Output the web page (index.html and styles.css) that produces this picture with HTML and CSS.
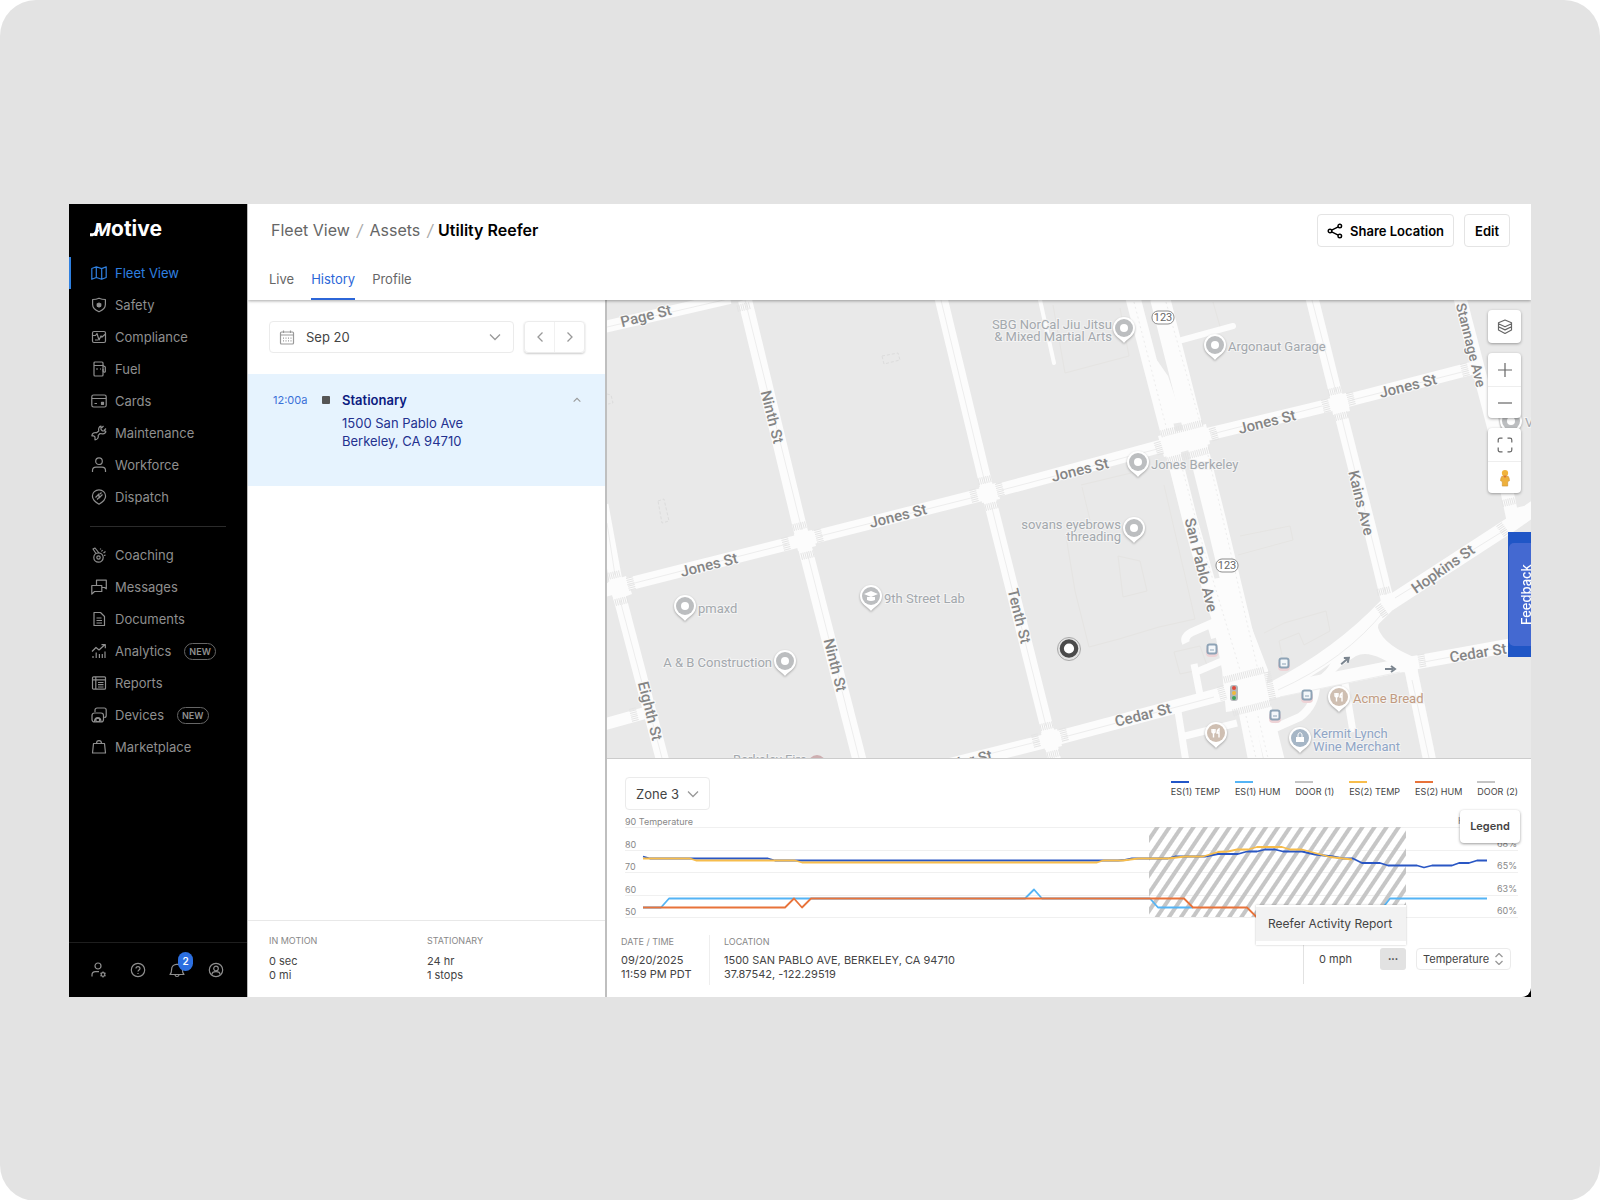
FILE: index.html
```html
<!DOCTYPE html>
<html lang="en">
<head>
<meta charset="utf-8">
<meta name="viewport" content="width=device-width, initial-scale=1">
<title>Utility Reefer - Fleet View</title>
<link rel="stylesheet" href="styles.css">
</head>
<body>
<div class="stage">
<div class="app">
  <aside class="sidebar">
    <svg class="logo" width="76" height="24" viewBox="0 0 76 24" role="img" aria-label="Motive">
      <path class="logo-tail" d="M1 18.700h2.500q2 0 3.500-2.200l2-3"/>
      <text class="logo-m" x="5" y="20">M</text>
      <text class="logo-rest" x="22" y="20">otive</text>
    </svg>
    <nav class="nav">
      <a class="nav-item active" href="#"><svg class="icon" viewBox="0 0 16 16"><path d="M.8 3.500 5.300 1.800l5.400 1.800 4.500-1.800v10.700l-4.500 1.800-5.400-1.800-4.500 1.800zM5.300 1.800v10.700M10.700 3.600v10.700"/></svg>Fleet View</a>
      <a class="nav-item" href="#"><svg class="icon" viewBox="0 0 16 16"><path d="M8 1.200c2 .9 4.200 1.300 6.400 1.300v5c0 3.500-2.600 5.700-6.400 7.300C4.200 13.200 1.600 11 1.600 7.500v-5C3.800 2.500 6 2.100 8 1.200z"/><path d="M8 5l.8 1.200 1.500-.3-.3 1.400L11 8l-1 .8.200 1.300-1.400-.2L8 11l-.8-1.100-1.400.2L6 8.800 5 8l1-.7-.3-1.400 1.500.3z" class="dim-fill"/></svg>Safety</a>
      <a class="nav-item" href="#"><svg class="icon" viewBox="0 0 16 16"><rect x="1.500" y="2.500" width="13" height="11" rx="1.500"/><path d="M1.500 6.500h3l1.500-2 2 6.500 2-4 1 1 3.500-3M4 11h3"/></svg>Compliance</a>
      <a class="nav-item" href="#"><svg class="icon" viewBox="0 0 16 16"><rect x="3" y="1" width="9" height="14" rx="1"/><path d="M3 4.500h9M5 8h2M9 8h1M12 4.500l2.300 1.500v4.500c0 1-2.300 1-2.300-1V8"/></svg>Fuel</a>
      <a class="nav-item" href="#"><svg class="icon" viewBox="0 0 16 16"><rect x=".8" y="2" width="14.400" height="12" rx="1.800"/><path d="M1 5.500h14M3.500 10.500h2.500"/><rect x="10.500" y="9.300" width="2" height="2" class="fill"/></svg>Cards</a>
      <a class="nav-item" href="#"><svg class="icon" viewBox="0 0 16 16"><path d="M10 1.200v3.300L11.500 6h3.300c.3 1.500-1.300 3-3.300 2.800L9 8.500 7.200 10.300c.5 2-.5 4.500-3.200 4.500V12l-1.200-1.200H.9C1 8.300 3.500 7 5.500 7.800L7.800 6C7 3.500 8.300 1.500 10 1.200zM12.500 1l-1.800 1.800M15 3.500l-2 2"/></svg>Maintenance</a>
      <a class="nav-item" href="#"><svg class="icon" viewBox="0 0 16 16"><circle cx="8" cy="4.200" r="3.300"/><path d="M1.500 15v-1.500c0-2 1.500-3.300 3.500-3.300h6c2 0 3.500 1.300 3.500 3.300V15"/></svg>Workforce</a>
      <a class="nav-item" href="#"><svg class="icon" viewBox="0 0 16 16"><path d="M8 15.200S1.400 11.500 1.400 7a6.600 6.200 0 0 1 13.200 0c0 4.500-6.600 8.200-6.600 8.200z"/><path d="M4.500 8.500 8 5v4l3.500-3.500M6 10.500l1.500-1.500M9 5l1.500-1.500"/></svg>Dispatch</a>
      <hr class="nav-rule">
      <a class="nav-item" href="#"><svg class="icon" viewBox="0 0 16 16"><circle cx="7.500" cy="10.500" r="4.700"/><circle cx="7.500" cy="10.500" r="1.700"/><path d="M5 6.500 2 2l2-1 4 5M10.500 4.500l1-1.500M12.500 6l2-1.500M13 8.500l1.500-.3M9.500 1.500v1"/></svg>Coaching</a>
      <a class="nav-item" href="#"><svg class="icon" viewBox="0 0 16 16"><path d="M5.500 6V1.200h9.800v8.600l-1.800-1.300h-2.700M.8 15.200V6.500h10v6H3.500z"/></svg>Messages</a>
      <a class="nav-item" href="#"><svg class="icon" viewBox="0 0 16 16"><path d="M3 1.500h6.500l4 4v9H3zM5.500 7h5M5.500 9.500h5.500M5.500 12h5.500"/></svg>Documents</a>
      <a class="nav-item" href="#"><svg class="icon" viewBox="0 0 16 16"><path d="M1 8.500 5 4.500l3 2.500 5.500-5M10.500 1.700h3.800v3.600M2 15v-2M5.200 15V9.500M8.400 15v-4M11.300 15v-4M14 15V8.500"/></svg>Analytics<span class="tag">NEW</span></a>
      <a class="nav-item" href="#"><svg class="icon" viewBox="0 0 16 16"><rect x="1.500" y="1.800" width="13" height="12.400" rx="1"/><path d="M1.500 4.800h13M4.800 2v12M7 7.500h5.500M7 9.700h5.500M7 12h5.500"/></svg>Reports</a>
      <a class="nav-item" href="#"><svg class="icon" viewBox="0 0 16 16"><path d="M4 5V3a2 2 0 0 1 2-2h7.200a2 2 0 0 1 2 2v5.500a2 2 0 0 1-2 2"/><rect x="1" y="6" width="11.500" height="9" rx="2.500"/><path d="M3.500 15c0-6 6.500-6 6.500 0M5 11.500h3.500v3H5z"/></svg>Devices<span class="tag">NEW</span></a>
      <a class="nav-item" href="#"><svg class="icon" viewBox="0 0 16 16"><path d="M2.500 4.500h11l1 9.500h-13zM5.500 4.500c0-3.800 5-3.800 5 0"/></svg>Marketplace</a>
    </nav>
    <div class="tools">
      <button aria-label="Admin"><svg class="icon" viewBox="0 0 16 16"><circle cx="7" cy="4" r="3"/><path d="M1 14.500V13c0-2 1.200-3.300 3.500-3.300H8"/><circle cx="12" cy="12.500" r="1.800"/><path d="M12 9.500v1.200M12 14.300v1.200M9.400 11l1 .6M13.600 13.400l1 .6M9.400 14l1-.6M13.600 11.600l1-.6"/></svg></button>
      <button aria-label="Help"><svg class="icon" viewBox="0 0 16 16"><circle cx="8" cy="8" r="6.700"/><path d="M6 6.500C6 3.800 10 4 10 6.400 10 8 8 8 8 9.600M8 11v1"/></svg></button>
      <button class="bell" aria-label="Notifications, 2 new"><svg class="icon" viewBox="0 0 16 16"><path d="M1 12.500c1.300-1 1.600-2.300 1.600-5A5 5 0 0 1 8 2.300a5 5 0 0 1 5.400 5.200c0 2.700.3 4 1.600 5zM6 13c.3 2 3.700 2 4 0"/></svg><span class="count">2</span></button>
      <button aria-label="Account"><svg class="icon" viewBox="0 0 16 16"><circle cx="8" cy="8" r="6.700"/><circle cx="8" cy="6.500" r="2.300"/><path d="M4 12.500c0-2 1.500-2.800 4-2.800s4 .8 4 2.800"/></svg></button>
    </div>
  </aside>

  <main class="main">
    <header class="header">
      <div class="title-row">
        <nav class="crumbs"><a href="#">Fleet View</a><i>/</i><a href="#">Assets</a><i>/</i><b>Utility Reefer</b></nav>
        <div class="actions">
          <button class="btn"><svg class="icon share" viewBox="0 0 16 16"><circle cx="3" cy="8" r="1.800"/><circle cx="12.800" cy="3" r="1.800"/><circle cx="12.800" cy="13" r="1.800"/><path d="m4.700 7.200 6.500-3.400M4.700 8.800l6.500 3.400"/></svg>Share Location</button>
          <button class="btn edit">Edit</button>
        </div>
      </div>
      <nav class="tabs"><a href="#">Live</a><a class="current" href="#">History</a><a href="#">Profile</a></nav>
    </header>

    <div class="body">
      <section class="history">
        <div class="date-row">
          <div class="select date-select">
            <svg class="icon" viewBox="0 0 16 16"><rect x="1.500" y="3" width="13" height="12" rx="1"/><path d="M1.500 6h13M4.500 1.500V4M11.500 1.500V4"/><path d="M4 9.200h8.500M4 11.800h8.500" stroke-dasharray="1 1.500"/></svg>
            <select aria-label="Date"><option>Sep 20</option></select>
            <svg class="chev" viewBox="0 0 12 12"><path d="m1 3.500 5 5 5-5"/></svg>
          </div>
          <div class="pager">
            <button aria-label="Previous day"><svg class="chev" viewBox="0 0 12 12"><path d="M8.500 1.500 4 6l4.500 4.500"/></svg></button>
            <button aria-label="Next day"><svg class="chev" viewBox="0 0 12 12"><path d="M3.500 1.500 8 6l-4.500 4.500"/></svg></button>
          </div>
        </div>
        <article class="event">
          <time>12:00a</time>
          <span class="stop"></span>
          <div class="place"><h2>Stationary</h2><p>1500 San Pablo Ave<br>Berkeley, CA 94710</p></div>
          <svg class="chev small" viewBox="0 0 12 12"><path d="m2 8 4-4 4 4"/></svg>
        </article>
        <footer class="totals">
          <dl><dt>IN MOTION</dt><dd>0 sec</dd><dd>0 mi</dd></dl>
          <dl><dt>STATIONARY</dt><dd>24 hr</dd><dd>1 stops</dd></dl>
        </footer>
      </section>

      <section class="detail">
        <div class="map">
          <svg class="map-art" viewBox="607 300 924 458" preserveAspectRatio="xMidYMid slice" role="img" aria-label="Street map of Berkeley">
            <defs>
              <g id="pin"><path class="pin-drop" d="M0 15 C-3 11-11 8-11 0a11 11 0 0 1 22 0C11 8 3 11 0 15z"/><circle class="pin-disc" r="9"/></g>
              <g id="dotpin"><use href="#pin"/><circle r="4" fill="#fff"/></g>
              <g id="fork"><path d="M-4-4v3q1.500 2 3 0v-3M-2.500-4v8.500M3 4.500V-4q-2 1-2 4h2" fill="none" stroke="#fff" stroke-width="1.400"/></g>
              <g id="bus"><rect x="-6" y="-3" width="12" height="11" rx="4" fill="#eed3d6"/><rect x="-5.500" y="-5.500" width="11" height="11" rx="3" fill="#8ea3b6"/><rect x="-3.500" y="-3.500" width="7" height="7" rx="1" fill="#f4f7fa"/><path d="M-2 1h4" stroke="#8ea3b6"/></g>
              <path id="zebra" class="zebra" d="M-7 0H7"/>
              <path id="arrow" d="M-5 0H3M1-3l4 3-4 3" fill="none" stroke="#7b858f" stroke-width="2"/>
            </defs>
            <rect x="607" y="300" width="924" height="458" fill="#e9e9e9"/>
            <g class="faint">
              <path d="m882 356 16-3 2 7-16 4zM658 501l6-2 5 22-7 2zM607 394l4 1 2 8-5 1" stroke-dasharray="3 2"/>
              <path d="M1053 305l12 68 64-17-9-48M1213 302l8 28M1081 485l50-12M1082 487l8 33M1066 536l9 55 14 56 30-8 40-12 36-8-31-134M1118 556l22 5 7 30-24 6zM1238 555l55-15-3-14-50 10M1264 633l20-10 42-12 4 20-26 14-5-12-20 8 3 14M1174 652l26-6 8 22-28 6z"/>
            </g>
            <g class="roads">
              <path d="M600 328 730 298" stroke-width="12"/>
              <path d="M745 300 803 540 860 762" stroke-width="14"/>
              <path d="M602 505 617 587 663 762" stroke-width="13"/>
              <path d="M602 591 617 587 803 540 988 493 1180 441 1338 403 1473 368" stroke-width="13"/>
              <path d="M602 725 645 713" stroke-width="12"/>
              <path d="M941 298 988 493 1050 740 1055 762" stroke-width="13"/>
              <path d="M930 770 1050 740 1230 692" stroke-width="14"/>
              <path d="M1133 298 1170 440 1190 520 1213 600 1240 680 1256 762" stroke-width="15"/>
              <path d="M1160 298 1193 428 1216 520 1252 670 1275 762" stroke-width="20"/>
              <path d="M1312 298 1338 403 1369 525 1388 603" stroke-width="13"/>
              <path d="M1460 298 1493 425 1513 520" stroke-width="13"/>
              <path d="M1250 700Q1330 665 1387 605L1513 523 1540 504" stroke-width="15"/>
              <path d="M1378 615Q1340 665 1316 684 1316 705 1300 717L1275 728" stroke-width="8"/>
              <path d="M1260 694 1413 663 1540 640" stroke-width="14"/>
              <path d="M1410 665 1430 762" stroke-width="13"/>
              <path d="M1345 683 1353 732M1177 705 1186 762M1185 736 1237 723M1194 664 1200 695M1194 673 1222 661" stroke-width="7"/>
              <path d="M1186 643Q1183 637 1192 632L1215 622M1211 624l4 14" stroke-width="8"/>
              <path d="M1040 300 1054 363" stroke-width="4" stroke-linecap="round"/>
              <path d="M1182 340 1233 326" stroke-width="6" stroke-linecap="round"/>
            </g>
            <g fill="#fcfcfc">
              <path d="M1205 580 1232 576 1268 670 1265 706 1226 712 1222 670zM1380 605 1378 628Q1384 646 1419 659L1417 674 1402 672Q1372 648 1356 656L1320 680 1345 640z"/>
              <path d="M1158 436 1206 424 1210 444 1164 457zM608 582l18-6 6 18-18 7zM794 534l18-4 4 16-18 5zM979 487l17-4 4 16-18 4zM1330 397l16-4 4 18-17 4zM1041 733l16-4 5 17-17 4zM1506 510l18-4 3 16-17 4z"/>
              <path d="M1150 350 1168 376 1176 400 1196 420 1165 425z"/>
            </g>
            <g class="center">
              <path d="M607 327 728 299M745 300l57 230M807 552l52 206M607 523l8 52M620 600l42 158M627 585l160-41M820 536l155-39M1002 490l155-41M1212 434l110-28M1352 400l110-28M941 300l44 183M992 508l54 218M930 769l110-28M1064 737l150-40M1312 300l24 92M1341 415l45 180M1395 598l110-68M1278 690Q1345 660 1385 610M1280 697l120-25M1424 662l107-20M1412 680l17 78"/>
              <path d="M1134 302l34 132M1166 302l34 120M1180 460l24 90 36 120M1208 455l50 215M1258 716l10 42M1246 716l10 42" stroke-dasharray="2 3"/>
            </g>
            <g>
              <use href="#zebra" transform="translate(800 526) rotate(-14)"/><use href="#zebra" transform="translate(808 555) rotate(-14)"/><use href="#zebra" transform="translate(786 544) rotate(76)"/><use href="#zebra" transform="translate(819 536) rotate(76)"/>
              <use href="#zebra" transform="translate(985 480) rotate(-14)"/><use href="#zebra" transform="translate(992 506) rotate(-14)"/><use href="#zebra" transform="translate(974 496) rotate(76)"/><use href="#zebra" transform="translate(1000 490) rotate(76)"/>
              <use href="#zebra" transform="translate(614 575) rotate(-14)"/><use href="#zebra" transform="translate(622 601) rotate(-14)"/><use href="#zebra" transform="translate(631 584) rotate(76)"/><use href="#zebra" transform="translate(634 715) rotate(76)"/>
              <use href="#zebra" transform="translate(1335 391) rotate(-14)"/><use href="#zebra" transform="translate(1342 416) rotate(-14)"/><use href="#zebra" transform="translate(1326 406) rotate(76)"/><use href="#zebra" transform="translate(1351 399) rotate(76)"/><use href="#zebra" transform="translate(1465 370) rotate(76)"/>
              <use href="#zebra" transform="translate(1047 726) rotate(-14)"/><use href="#zebra" transform="translate(1054 754) rotate(-14)"/><use href="#zebra" transform="translate(1036 741) rotate(76)"/><use href="#zebra" transform="translate(1064 735) rotate(76)"/>
              <use href="#zebra" transform="translate(744 307) rotate(-14)"/><use href="#zebra" transform="translate(1384 591) rotate(-14)"/><use href="#zebra" transform="translate(1382 611) rotate(55)"/><use href="#zebra" transform="translate(1422 661) rotate(80)"/><use href="#zebra" transform="translate(1509 502) rotate(-14)"/><use href="#zebra" transform="translate(1503 530) rotate(55)"/>
              <path class="zebra" d="M1161 434l42-11M1168 461l42-11M1224 680l40-10M1233 713l38-10M1220 686l4 14M1267 672l6 28M1157 442l4 13M1212 428l4 13"/>
            </g>
            <g class="street">
              <text transform="translate(646 316) rotate(-14)">Page St</text>
              <text transform="translate(772 417) rotate(76)">Ninth St</text>
              <text transform="translate(835 665) rotate(76)">Ninth St</text>
              <text transform="translate(650 711) rotate(76)">Eighth St</text>
              <text transform="translate(1019 616) rotate(76)">Tenth St</text>
              <text transform="translate(709 565) rotate(-14)">Jones St</text>
              <text transform="translate(898 516) rotate(-14)">Jones St</text>
              <text transform="translate(1080 470) rotate(-14)">Jones St</text>
              <text transform="translate(1267 422) rotate(-14)">Jones St</text>
              <text transform="translate(1408 386) rotate(-14)">Jones St</text>
              <text transform="translate(1201 565) rotate(76)">San Pablo Ave</text>
              <text transform="translate(1361 503) rotate(76)">Kains Ave</text>
              <text class="tight" transform="translate(1471 345) rotate(76)">Stannage Ave</text>
              <text transform="translate(1443 569) rotate(-35)">Hopkins St</text>
              <text transform="translate(1143 715) rotate(-14)">Cedar St</text>
              <text transform="translate(964 762) rotate(-14)">Cedar St</text>
              <text transform="translate(1478 653) rotate(-9)">Cedar St</text>
            </g>
            <g class="shield"><rect x="1152" y="311" width="22" height="13" rx="6"/><text x="1163" y="321">123</text><rect x="1216" y="559" width="22" height="13" rx="6"/><text x="1227" y="569">123</text></g>
            <g fill="#bcbec0">
              <use href="#dotpin" x="1124" y="328"/><use href="#dotpin" x="1215" y="345"/><use href="#dotpin" x="1138" y="462"/><use href="#dotpin" x="1134" y="528"/><use href="#dotpin" x="685" y="606"/><use href="#dotpin" x="785" y="661"/><use href="#dotpin" x="1511" y="421"/>
              <use href="#pin" x="871" y="596"/>
            </g>
            <path d="m864 594 7-3 7 3-7 3zM867 597v3q4 2 8 0v-3" fill="#fff"/>
            <g class="poi">
              <text class="end" x="1112" y="329">SBG NorCal Jiu Jitsu</text><text class="end" x="1112" y="341">&amp; Mixed Martial Arts</text>
              <text x="1228" y="351">Argonaut Garage</text><text x="1151" y="469">Jones Berkeley</text>
              <text class="end" x="1121" y="529">sovans eyebrows</text><text class="end" x="1121" y="541">threading</text>
              <text x="698" y="613">pmaxd</text><text x="884" y="603">9th Street Lab</text><text class="end" x="772" y="667">A &amp; B Construction</text><text x="1525" y="427">V</text>
              <text x="733" y="764">Berkeley Fire</text>
              <g fill="#c19a80"><text x="1353" y="703">Acme Bread</text></g>
              <g fill="#8fa5c6"><text x="1313" y="738">Kermit Lynch</text><text x="1313" y="751">Wine Merchant</text></g>
            </g>
            <circle cx="817" cy="764" r="9" fill="#cdaeb0"/>
            <use href="#pin" x="1339" y="697" fill="#cfbfb2"/><use href="#fork" x="1339" y="697"/>
            <use href="#pin" x="1216" y="733" fill="#cfbfb2"/><use href="#fork" x="1216" y="733"/>
            <use href="#pin" x="1300" y="738" fill="#a6b6c6"/><path d="M1296 737h8v5h-8z" fill="#fff"/><path d="M1298 737v-2c0-3 4-3 4 0v2" fill="none" stroke="#fff"/>
            <use href="#bus" x="1212" y="649"/><use href="#bus" x="1284" y="663"/><use href="#bus" x="1307" y="695"/><use href="#bus" x="1275" y="715"/>
            <rect x="1230" y="685" width="8" height="16" rx="3" fill="#b4b7ba"/><circle cx="1234" cy="688" r="2" fill="#df4b3d"/><circle cx="1234" cy="693" r="2" fill="#f0b93a"/><circle cx="1234" cy="698" r="2" fill="#3fa45b"/>
            <use href="#arrow" transform="translate(1345 661) rotate(-40)"/><use href="#arrow" transform="translate(1390 669)"/>
            <circle cx="1069" cy="649" r="11.500" fill="#e4e4e4" stroke="#a9a9a9"/><circle cx="1069" cy="648.500" r="7.200" fill="#fff" stroke="#4b4b4b" stroke-width="4.200"/>
          </svg>
          <div class="map-controls">
            <div class="ctl"><button aria-label="Layers"><svg class="icon" viewBox="0 0 16 16"><path d="M8 1 14.500 3.800v1L8 7.800 1.500 4.800v-1zM1.500 4.800v3L8 10.900l6.500-3.100v-3M1.500 7.800v3.200L8 14.500l6.500-3.500V7.800"/></svg></button></div>
            <div class="ctl"><button aria-label="Zoom in"><svg class="icon" viewBox="0 0 16 16"><path d="M8 1v14M1 8h14"/></svg></button><button aria-label="Zoom out"><svg class="icon" viewBox="0 0 16 16"><path d="M1 8h14"/></svg></button></div>
            <div class="ctl"><button aria-label="Full screen"><svg class="icon" viewBox="0 0 16 16"><path d="M1.200 5.500V3q0-1.800 1.800-1.800h2.500M10.500 1.200H13q1.800 0 1.800 1.800v2.500M14.800 10.500V13q0 1.800-1.800 1.800h-2.500M5.500 14.800H3q-1.800 0-1.800-1.800v-2.500"/></svg></button><button aria-label="Street view"><svg width="12" height="18" viewBox="0 0 12 20"><circle cx="6" cy="4.500" r="3.500" fill="#f1b33b"/><path d="M2.500 8h7q1.500 2 1.500 5L9 14v5H3v-5l-2-1q0-3 1.500-5z" fill="#eeb03c" stroke="#c98c2c" stroke-width=".6"/><path d="m4 7.500 2 2.500 2-2.500z" fill="#d8722f"/></svg></button></div>
          </div>
          <button class="feedback"><span>Feedback</span></button>
        </div>

        <div class="report">
          <div class="report-top">
            <div class="select zone-select"><select aria-label="Zone"><option>Zone 3</option></select><svg class="chev" viewBox="0 0 12 12"><path d="m1 3.500 5 5 5-5"/></svg></div>
            <ul class="series">
              <li class="s-navy">ES(1) TEMP</li><li class="s-sky">ES(1) HUM</li><li>DOOR (1)</li><li class="s-gold">ES(2) TEMP</li><li class="s-rust">ES(2) HUM</li><li>DOOR (2)</li>
            </ul>
          </div>
          <div class="chart">
            <svg viewBox="625 812 893 108" role="img" aria-label="Temperature and humidity history">
              <defs><pattern id="hatch" width="10" height="10" patternUnits="userSpaceOnUse" patternTransform="rotate(34)"><rect width="4" height="10" fill="#c6c6c6"/></pattern></defs>
              <path class="grid" d="M625 827.500h893M625 850.500h893M625 872.500h893M625 895.500h893M625 917.500h893"/>
              <rect x="1149" y="827" width="257" height="90" fill="url(#hatch)"/>
              <g class="axis"><text x="625" y="825">90 Temperature</text><text x="625" y="848">80</text><text x="625" y="870">70</text><text x="625" y="893">60</text><text x="625" y="915">50</text>
              <text x="1458" y="824">H</text><g class="end"><text x="1517" y="847">68%</text><text x="1517" y="869">65%</text><text x="1517" y="892">63%</text><text x="1517" y="914">60%</text></g></g>
              <g class="lines">
                <path stroke="#54b4f5" d="M643 907.500H661L669 898.500H1025L1034 889.500 1042 898.500H1150L1158 907.500H1193M1383 907.500 1390 898.500H1487"/>
                <path stroke="#2a57c4" d="M643 856.500 650 858.500H768L775 860.500H1118L1125 860 1132 858.500H1168L1175 856.500H1205L1218 854H1238L1247 851.500H1257L1265 849.500H1275L1283 851.500H1302L1315 854.500 1333 856.500 1343 858.500H1353L1362 863H1380L1388 865.500H1417L1424 867.500 1432 865.500H1452L1459 863H1469L1477 860.500H1487"/>
                <path stroke="#f7bd4c" d="M643 858.500H690L696 860.500H795L802 862.500H1097L1103 860.500H1123L1138 858.500H1168L1185 856.500H1203L1218 852 1228 851.500 1237 849.500H1248L1257 847H1282L1290 849.500H1302L1330 857 1352 859.500"/>
                <path stroke="#e8733a" d="M643 907.500H785L794 898.500 802 907.500 811 898.500H1184L1193 907.500H1247L1257 917.500"/>
              </g>
            </svg>
            <div class="legend-tip">Legend</div>
          </div>
          <div class="facts">
            <dl class="fact"><dt>DATE / TIME</dt><dd>09/20/2025</dd><dd>11:59 PM PDT</dd></dl>
            <dl class="fact ruled"><dt>LOCATION</dt><dd>1500 SAN PABLO AVE, BERKELEY, CA 94710</dd><dd>37.87542, -122.29519</dd></dl>
            <div class="readout">
              <span class="speed">0 mph</span>
              <div class="more"><button class="more-btn" aria-label="More">•••</button><div class="menu"><a href="#">Reefer Activity Report</a></div></div>
              <div class="select temp-select"><select aria-label="Measure"><option>Temperature</option></select><svg class="chev" viewBox="0 0 12 12"><path d="m2.500 4 3.500-3.500L9.500 4M2.500 8 6 11.500 9.500 8"/></svg></div>
            </div>
          </div>
        </div>
      </section>
    </div>
  </main>
</div>
</div>
</body>
</html>
```
FILE: styles.css
```css
* { box-sizing: border-box; }
body { margin: 0; background: #fff; color: #444; font: 13px/16px Inter, "Liberation Sans", sans-serif; }
button, select { font: inherit; color: inherit; margin: 0; padding: 0; border: 0; background: none; }
a { color: inherit; text-decoration: none; }
dl, dd, ul, p, h2 { margin: 0; padding: 0; }
svg { display: block; flex: none; }

.stage { display: grid; min-height: 100vh; padding: 204px 69px; background: #e3e3e3; border-radius: 36px; }
.app { display: grid; grid-template-columns: 178px minmax(0, 1fr); background: #000; }
.icon { width: 16px; height: 16px; fill: none; stroke: currentColor; stroke-width: 1.2; stroke-linejoin: round; }
.icon .fill, .icon .dim-fill { fill: currentColor; }
.icon .dim-fill { stroke: none; }
.chev { width: 12px; height: 12px; fill: none; stroke: #999; stroke-width: 1.3; }
.chev.small { width: 10px; height: 10px; }

/* Sidebar */
.sidebar { display: flex; flex-direction: column; color: #8f8f8f; }
.logo { margin: 12px 0 17px 20px; fill: #fff; }
.logo-m { font: italic 700 18px Inter, sans-serif; }
.logo-rest { font: 700 21px Inter, sans-serif; }
.logo-tail { fill: none; stroke: #fff; stroke-width: 3; }
.nav { display: flex; flex-direction: column; flex: 1; }
.nav-item { display: flex; align-items: center; gap: 8px; height: 32px; padding-left: 22px; }
.nav-item.active { padding-left: 20px; border-left: 2px solid #2f80e0; color: #2f80e0; }
.nav-rule { width: 136px; height: 1px; margin: 13px 0 12px 21px; border: 0; background: #2b2b2b; }
.tag { margin-left: 5px; padding: 0 4px; border: 1px solid #666; border-radius: 9px; font-size: 9px; font-weight: 600; line-height: 15px; }
.tools { display: flex; gap: 23px; height: 55px; padding: 19px 22px 0; border-top: 1px solid #1e1e1e; }
.tools button { position: relative; height: 16px; }
.count { position: absolute; left: 9px; top: -10px; width: 15px; height: 19px; border-radius: 8px; background: #2c6fe0; color: #fff; font-size: 10px; font-weight: 600; line-height: 19px; text-align: center; }

/* Header */
.main { display: flex; flex-direction: column; background: #fff; border-left: 1px solid #bbb; border-bottom-right-radius: 9px; overflow: hidden; }
.header { position: relative; z-index: 1; display: flex; flex-direction: column; justify-content: space-between; height: 96px; padding: 10px 21px 0; background: #fff; box-shadow: 0 1px 3px rgba(0,0,0,.35); }
.title-row { display: flex; justify-content: space-between; align-items: center; }
.crumbs { display: flex; gap: 7px; padding: 0 0 2px 2px; font-size: 16px; line-height: 20px; color: #666; }
.crumbs i { color: #aaa; }
.crumbs b { color: #000; font-weight: 600; margin-left: -2px; }
.actions { display: flex; gap: 10px; }
.btn { display: flex; align-items: center; gap: 7px; height: 33px; padding: 0 9px; border: 1px solid #e4e4e4; border-radius: 4px; color: #000; font-weight: 600; }
.btn.edit { padding: 0 10px; }
.share { stroke-width: 1.4; }
.tabs { display: flex; gap: 17px; color: #666; }
.tabs a { height: 29px; }
.tabs .current { color: #2c66d8; border-bottom: 2px solid #2c66d8; }

/* History column */
.body { display: grid; grid-template-columns: 359px minmax(0, 1fr); flex: 1; }
.history { display: flex; flex-direction: column; border-right: 2px solid #bfbfbf; }
.select { display: flex; align-items: center; position: relative; border: 1px solid #ebebeb; border-radius: 4px; }
.select select { appearance: none; flex: 1; min-width: 0; height: 100%; }
.select .chev { position: absolute; right: 12px; pointer-events: none; }
.date-row { display: flex; gap: 10px; padding: 21px 20px 21px 21px; }
.date-select { flex: 1; height: 32px; padding-left: 9px; gap: 11px; }
.date-select .icon { color: #999; }
.pager { display: flex; width: 61px; border-radius: 4px; border: 1px solid #ececec; box-shadow: 0 1px 2px rgba(0,0,0,.2); }
.pager button { flex: 1; display: grid; place-items: center; }
.pager button + button { border-left: 1px solid #f1f1f1; }
.event { display: flex; height: 112px; padding: 18px 23px 0 25px; background: #e6f3fe; color: #23318f; }
.event time { width: 49px; color: #3a70d8; font-size: 11px; }
.stop { width: 8px; height: 8px; margin: 4px 12px 0 0; border-radius: 1px; background: #555; }
.place { flex: 1; line-height: 18px; }
.place h2 { margin-bottom: 6px; font-size: 13px; line-height: 16px; font-weight: 600; color: #0b1b80; }
.event .chev { margin-top: 3px; }
.totals { display: grid; grid-template-columns: 158px 1fr; margin-top: auto; height: 77px; padding: 13px 21px; border-top: 1px solid #e8e8e8; }
dl { font-size: 11px; line-height: 14px; }
dt { margin-bottom: 6px; font-size: 9px; line-height: 14px; color: #888; }

/* Map */
.detail { display: flex; flex-direction: column; }
.map { position: relative; flex: 1; overflow: hidden; border-bottom: 1px solid #ccc; }
.map-art { width: 100%; height: 100%; font-family: Roboto, sans-serif; }
.roads { fill: none; stroke: #fcfcfc; }
.center { fill: none; stroke: #ededed; }
.faint { fill: none; stroke: #dcdcdc; }
.faint path:last-child { stroke: #e5e4e2; }
.zebra { fill: none; stroke: #e4e4e4; stroke-width: 7; stroke-dasharray: 1 1; }
.pin-drop { fill: #fff; filter: drop-shadow(0 1px 1px rgba(0,0,0,.3)); }
.street { fill: #858585; stroke: #fafafa; stroke-width: 2; paint-order: stroke; font-size: 15px; font-weight: 500; text-anchor: middle; dominant-baseline: central; }
.street .tight { font-size: 14px; }
.poi { fill: #a3a8ad; stroke: #f3f3f3; stroke-width: 2; paint-order: stroke; font-size: 13px; }
.end { text-anchor: end; }
.shield rect { fill: #fff; stroke: #8c8c8c; }
.shield text { fill: #666; font-size: 11px; text-anchor: middle; }
.map-controls { position: absolute; top: 10px; right: 10px; display: flex; flex-direction: column; gap: 10px; color: #666; }
.ctl { width: 33px; border-radius: 4px; background: #fff; box-shadow: 0 1px 3px rgba(0,0,0,.35); }
.ctl button { display: grid; place-items: center; width: 33px; height: 33px; }
.ctl button + button { height: 32px; border-top: 1px solid #eee; }
.feedback { position: absolute; right: 0; top: 232px; width: 23px; height: 125px; padding: 11px 0 11px 1px; background: #2056c6; color: #fff; overflow: hidden; }
.feedback span { display: block; height: 103px; width: 34px; line-height: 34px; background: #4469d1; border-radius: 0 5px 5px 0; writing-mode: vertical-rl; transform: rotate(180deg); text-align: center; font-weight: 500; }

/* Report */
.report { height: 238px; padding: 18px 13px 0 18px; }
.report-top { display: flex; justify-content: space-between; height: 35px; }
.zone-select { width: 85px; height: 33px; padding-left: 10px; }
.zone-select .chev { right: 10px; }
.series { display: flex; gap: 15px; list-style: none; padding-top: 4px; font-size: 9px; line-height: 12px; }
.series li::before { content: ""; display: block; width: 18px; height: 2px; margin-bottom: 3px; background: #c4c4c4; }
.series .s-navy::before { background: #2256c8; }
.series .s-sky::before { background: #54b4f5; }
.series .s-gold::before { background: #f7bd4c; }
.series .s-rust::before { background: #e8733a; }
.chart { position: relative; }
.chart svg { width: 100%; height: auto; }
.grid { stroke: #f0f0f0; }
.axis { fill: #888; font-size: 9px; }
.lines { fill: none; stroke-width: 1.8; stroke-linejoin: round; }
.legend-tip { position: absolute; top: -2px; right: -2px; width: 60px; height: 33px; border-radius: 4px; background: #fff; box-shadow: 0 1px 3px rgba(0,0,0,.4); font-size: 11px; font-weight: 600; line-height: 33px; text-align: center; }
.facts { display: flex; height: 50px; margin: 15px 7px 0 -4px; }
.fact { width: 88px; }
.fact dt { margin-bottom: 4px; }
.fact.ruled { flex: 1; padding-left: 14px; border-left: 1px solid #eee; }
.readout { display: flex; align-items: center; height: 49px; padding: 0 0 1px 15px; border-left: 1px solid #e2e2e2; font-size: 11px; }
.speed { width: 61px; }
.more { position: relative; margin-right: 10px; }
.more-btn { display: block; width: 26px; height: 22px; border-radius: 3px; background: #e2e2e2; font-size: 6px; }
.menu { position: absolute; right: 0; bottom: 25px; width: 150px; padding: 2px 0 4px; background: #fff; box-shadow: 0 0 2px rgba(0,0,0,.25); font-size: 12px; }
.menu a { display: block; height: 34px; padding-left: 12px; background: #f2f2f2; line-height: 34px; white-space: nowrap; }
.temp-select { width: 95px; height: 22px; padding-left: 6px; }
.temp-select .chev { right: 5px; }
```
